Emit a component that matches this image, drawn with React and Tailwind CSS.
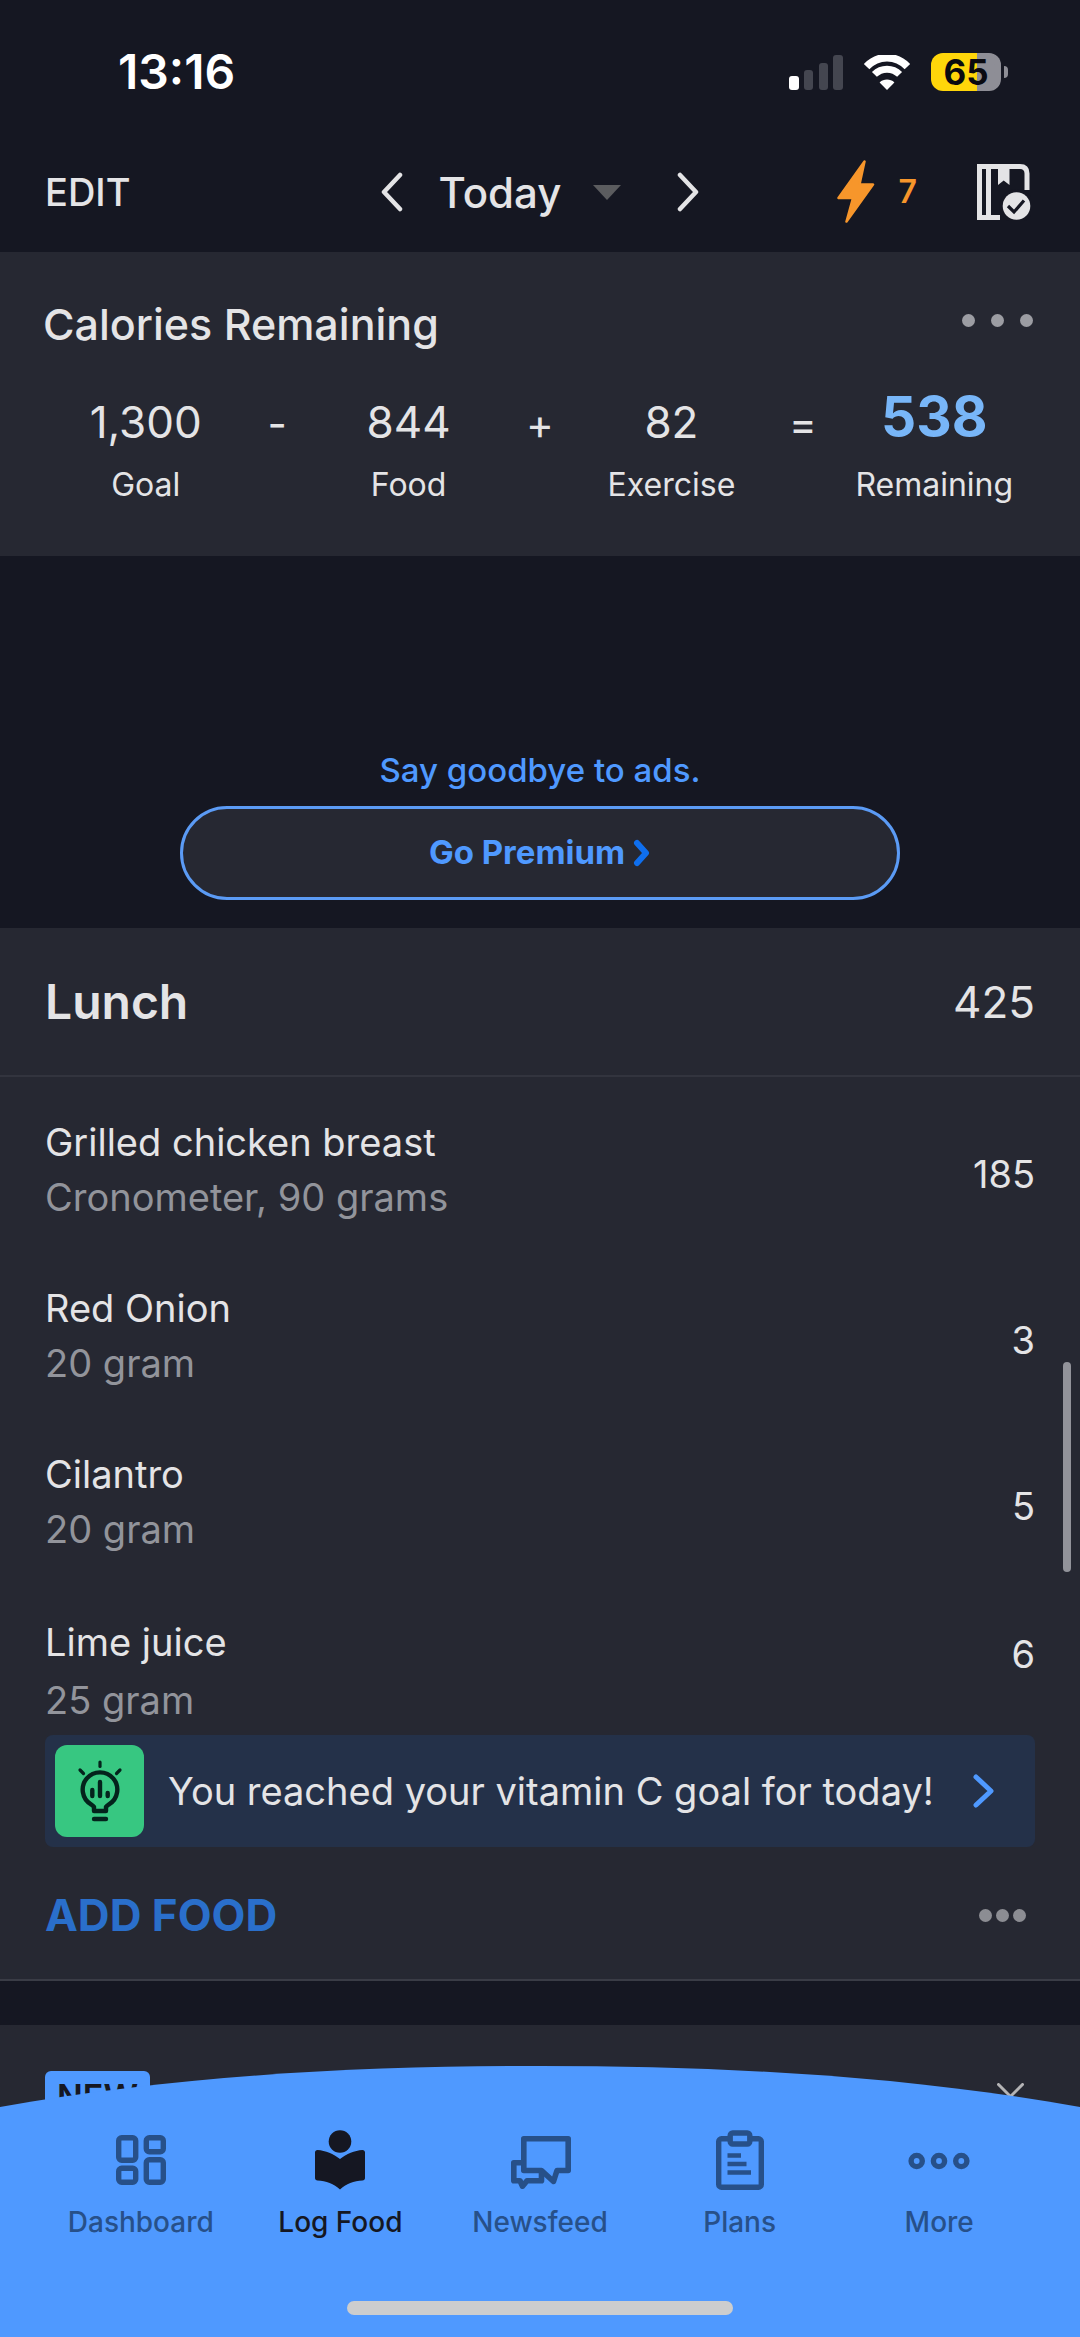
const SUMMARY = [
  { value: "1,300", label: "Goal" },
  { op: "-" },
  { value: "844", label: "Food" },
  { op: "+" },
  { value: "82", label: "Exercise" },
  { op: "=" },
  { value: "538", label: "Remaining", highlight: true },
];

const FOODS = [
  { name: "Grilled chicken breast", detail: "Cronometer, 90 grams", calories: "185" },
  { name: "Red Onion", detail: "20 gram", calories: "3" },
  { name: "Cilantro", detail: "20 gram", calories: "5" },
];

function SignalIcon() {
  return (
    <svg width="54" height="35" viewBox="0 0 54 35" role="img" aria-label="Signal">
      <rect x="0" y="21" width="10" height="14" rx="3" fill="#fff" />
      <rect x="15" y="15" width="9" height="20" rx="3" fill="#444650" />
      <rect x="30" y="8" width="9" height="27" rx="3" fill="#444650" />
      <rect x="44" y="0" width="10" height="35" rx="3" fill="#444650" />
    </svg>
  );
}

function WifiIcon() {
  return (
    <svg width="48" height="35" viewBox="0 0 48 35" fill="none" role="img" aria-label="Wi-Fi">
      <path d="M3.6 11.6C15-0.4 33-0.4 44.4 11.6" stroke="#fff" strokeWidth="7.6" />
      <path d="M11.4 19.4C18.4 12.4 29.6 12.4 36.600 19.4" stroke="#fff" strokeWidth="7" />
      <path d="M24 35L16.600 27.400C20.700 23.600 27.300 23.600 31.400 27.400Z" fill="#fff" />
    </svg>
  );
}

function ChevronLeft() {
  return (
    <svg width="22" height="40" viewBox="0 0 22 40" fill="none" stroke="#e4e4e6" strokeWidth="4.500" strokeLinecap="round" strokeLinejoin="round">
      <path d="M19 3L3 20L19 37" />
    </svg>
  );
}

function ChevronRight() {
  return (
    <svg width="22" height="40" viewBox="0 0 22 40" fill="none" stroke="#e4e4e6" strokeWidth="4.500" strokeLinecap="round" strokeLinejoin="round">
      <path d="M3 3L19 20L3 37" />
    </svg>
  );
}

function BoltIcon() {
  return (
    <svg width="38" height="64" viewBox="0 0 38 64" fill="#f7962b" stroke="#f7962b" strokeWidth="2.500" strokeLinejoin="round">
      <path d="M27.500 1.500L1.500 38H16L9.500 61.500L36 24.500H22.500Z" />
    </svg>
  );
}

function JournalIcon() {
  return (
    <svg width="54" height="57" viewBox="0 0 54 57" fill="none">
      <path d="M50 26V9.500C50 5 47.500 2.500 43 2.500H2.500V53.500H23" stroke="#e4e4e6" strokeWidth="5" />
      <path d="M11.500 3V53" stroke="#e4e4e6" strokeWidth="5" />
      <path d="M21 3H32.500V21L26.700 16.500L21 21Z" fill="#e4e4e6" />
      <circle cx="39.500" cy="42" r="17" fill="#151722" />
      <circle cx="39.500" cy="42" r="13.800" fill="#e4e4e6" />
      <path d="M31 42L37 48L47 36.500" stroke="#151722" strokeWidth="3.200" />
    </svg>
  );
}

function InsightIcon() {
  return (
    <svg width="46" height="62" viewBox="0 0 46 62" fill="none" stroke="#04231c" strokeLinecap="round">
      <path d="M23 2V6.500" strokeWidth="3.200" />
      <path d="M3 10L6.500 13.500M43 10L39.500 13.500" strokeWidth="3.200" />
      <path d="M17 51V47C16.400 46 15.400 45.400 14 44.400A17.300 17.300 0 1 1 32 44.400C30.600 45.400 29.600 46 29 47V51Z" strokeWidth="4.400" strokeLinejoin="round" />
      <path d="M23 22V36M15.300 30V36M30.700 33V36" strokeWidth="4.400" />
      <path d="M17 59H29" strokeWidth="4.400" />
    </svg>
  );
}

function DashboardIcon() {
  return (
    <svg width="60" height="60" viewBox="0 0 60 60" fill="none" stroke="currentColor" strokeWidth="5.400">
      <rect x="7.700" y="7.700" width="17" height="22.500" rx="3" />
      <rect x="35.300" y="7.700" width="17" height="14" rx="3" />
      <rect x="7.700" y="38.300" width="17" height="14" rx="3" />
      <rect x="35.300" y="29.800" width="17" height="22.500" rx="3" />
    </svg>
  );
}

function ReaderIcon() {
  return (
    <svg width="60" height="60" viewBox="0 0 60 60" fill="currentColor">
      <circle cx="30" cy="11.500" r="11.300" />
      <path d="M5 22.500C5 21 6 20 7.500 20C15.500 20.500 23.500 24 30 29C36.500 24 44.500 20.500 52.500 20C54 20 55 21 55 22.500V48C55 49.500 54 50.500 52.500 50.500C44 51 36 53.500 30 59.500C24 53.500 16 51 7.500 50.500C6 50.500 5 49.500 5 48Z" />
    </svg>
  );
}

function NewsfeedIcon() {
  return (
    <svg width="64" height="60" viewBox="0 0 64 60" fill="none" stroke="currentColor" strokeWidth="5.600" strokeLinejoin="round">
      <path d="M15.800 8.800H60.200V40.500H49L45.500 51.500L33.500 40.500H15.800Z" />
      <path d="M15.800 32.800H5.800V50.800H12L14.500 56.200L19 50.800H33.500V41" />
    </svg>
  );
}

function PlansIcon() {
  return (
    <svg width="60" height="60" viewBox="0 0 60 60" fill="none" stroke="currentColor" strokeWidth="5.400">
      <path d="M20 8.700H11.500C10 8.700 8.700 10 8.700 11.500V54.500C8.700 56 10 57.300 11.500 57.300H48.500C50 57.300 51.300 56 51.300 54.500V11.500C51.300 10 50 8.700 48.500 8.700H40" />
      <rect x="20.200" y="3" width="19.600" height="11" rx="2.500" />
      <path d="M17.500 25.500H31M17.500 34H36.500M17.500 42.500H41" strokeWidth="4.400" />
    </svg>
  );
}

function MoreIcon() {
  return (
    <svg width="62" height="60" viewBox="0 0 62 60" fill="none" stroke="currentColor" strokeWidth="5.400">
      <circle cx="8.700" cy="31" r="5.600" />
      <circle cx="31" cy="31" r="5.600" />
      <circle cx="53.300" cy="31" r="5.600" />
    </svg>
  );
}

const TABS = [
  { label: "Dashboard", Icon: DashboardIcon },
  { label: "Log Food", Icon: ReaderIcon, active: true },
  { label: "Newsfeed", Icon: NewsfeedIcon },
  { label: "Plans", Icon: PlansIcon },
  { label: "More", Icon: MoreIcon },
];

function StatusBar() {
  return (
    <div className="flex h-36 items-center justify-between pl-[118px] pr-[72px] text-white">
      <time className="text-[48px] font-semibold">13:16</time>
      <div className="flex items-center gap-5">
        <SignalIcon />
        <WifiIcon />
        <div className="flex items-center gap-[3px]">
          <div className="flex h-[38px] w-[70px] items-center justify-center rounded-xl bg-linear-to-r from-[#ffd60a] from-66% to-[#8e8e96] to-66% text-[35px] leading-none font-bold text-[#0a0a10]">
            65
          </div>
          <div className="h-3 w-1 rounded-r-full bg-[#8e8e96]" />
        </div>
      </div>
    </div>
  );
}

function Header() {
  return (
    <header className="grid h-[108px] grid-cols-[1fr_auto_1fr] items-center px-[45px] pb-3 text-[#e4e4e6]">
      <button type="button" className="justify-self-start text-[38px] font-medium">
        EDIT
      </button>
      <div className="flex items-center">
        <button type="button" aria-label="Previous day">
          <ChevronLeft />
        </button>
        <button type="button" className="flex items-center gap-8 pr-14 pl-9 text-[42px] font-medium">
          Today
          <svg width="28" height="15" viewBox="0 0 28 15" fill="#5b5c5f">
            <path d="M0 0H28L14 15Z" />
          </svg>
        </button>
        <button type="button" aria-label="Next day">
          <ChevronRight />
        </button>
      </div>
      <div className="flex items-center gap-[60px] justify-self-end pr-1">
        <button type="button" aria-label="Streak" className="flex items-center gap-6 text-[32px] font-semibold text-[#f7962b]">
          <BoltIcon />7
        </button>
        <button type="button" aria-label="Complete diary">
          <JournalIcon />
        </button>
      </div>
    </header>
  );
}

function CalorieSummary() {
  return (
    <section className="h-[304px] bg-[#262832] text-[#e4e4e6]">
      <div className="flex items-center justify-between px-[43px] pt-10">
        <h2 className="text-[43px] leading-[64px] font-medium">Calories Remaining</h2>
        <button type="button" aria-label="Summary options" className="flex gap-4 pr-1 pb-2">
          <span className="size-[13px] rounded-full bg-[#9c9da3]" />
          <span className="size-[13px] rounded-full bg-[#9c9da3]" />
          <span className="size-[13px] rounded-full bg-[#9c9da3]" />
        </button>
      </div>
      <div className="mt-7 grid grid-cols-7 px-20">
        {SUMMARY.map((item) =>
          item.op ? (
            <span key={item.op} className="text-center text-[42px] leading-[80px]">
              {item.op}
            </span>
          ) : (
            <div key={item.label} className="flex flex-col items-center whitespace-nowrap">
              {item.highlight ? (
                <strong className="pt-0.5 text-[55px] leading-[60px] font-bold text-[#78b6f8]">{item.value}</strong>
              ) : (
                <span className="text-[44px] leading-[76px]">{item.value}</span>
              )}
              <span className={item.highlight ? "pt-3.5 text-[32px] leading-[50px]" : "text-[32px] leading-[50px]"}>{item.label}</span>
            </div>
          )
        )}
      </div>
    </section>
  );
}

function PremiumBanner() {
  return (
    <section className="flex h-[372px] flex-col items-center justify-end pb-7 text-[#4f99ff]">
      <p className="text-[33px] leading-[44px] font-medium">Say goodbye to ads.</p>
      <button type="button" className="mt-3.5 flex h-[94px] w-2/3 items-center justify-center gap-2 rounded-full border-[3px] border-[#5b9bf5] bg-[#262832] text-[33px] font-bold">
        Go Premium
        <svg width="18" height="28" viewBox="0 0 18 28" fill="none" stroke="#0f6fee" strokeWidth="6" strokeLinecap="round" strokeLinejoin="round">
          <path d="M4 4L13 14L4 24" />
        </svg>
      </button>
    </section>
  );
}

function LunchCard() {
  return (
    <section className="border-b-2 border-[#3a3c46] bg-[#262832] text-[#e4e4e6]">
      <div className="flex h-[149px] items-center justify-between border-b-2 border-[#32343e] px-[45px]">
        <h2 className="text-[48px] font-semibold">Lunch</h2>
        <span className="text-[44px]">425</span>
      </div>
      <ul className="px-[45px] pt-3.5 text-[38px]">
        {FOODS.map((food) => (
          <li key={food.name} className="flex h-[166px] items-center justify-between">
            <div className="pb-2">
              <p className="leading-[55px]">{food.name}</p>
              <p className="leading-[55px] text-[#92949b]">{food.detail}</p>
            </div>
            <span>{food.calories}</span>
          </li>
        ))}
        <li className="flex items-start justify-between pt-6 leading-[58px]">
          <div>
            <p>Lime juice</p>
            <p className="text-[#92949b]">25 gram</p>
          </div>
          <span className="pt-3">6</span>
        </li>
      </ul>
      <div className="mt-1.5 px-[45px]">
        <button type="button" className="flex h-28 w-full items-center rounded-lg bg-[#243149] pr-10 pl-2.5">
          <span className="flex h-[92px] w-[89px] items-center justify-center rounded-xl bg-[#37c781]">
            <InsightIcon />
          </span>
          <span className="flex-1 pl-6 text-left text-[38px] whitespace-nowrap">You reached your vitamin C goal for today!</span>
          <svg width="22" height="34" viewBox="0 0 22 34" fill="none" stroke="#4f99ff" strokeWidth="5" strokeLinecap="round" strokeLinejoin="round">
            <path d="M3 3L18 17L3 31" />
          </svg>
        </button>
      </div>
      <div className="flex h-[132px] items-center justify-between pt-1 pr-[54px] pl-[45px]">
        <button type="button" className="text-[44px] font-bold text-[#2a6fcb]">
          ADD FOOD
        </button>
        <button type="button" aria-label="Lunch options" className="flex gap-1">
          <span className="size-[13px] rounded-full bg-[#8c8d93]" />
          <span className="size-[13px] rounded-full bg-[#8c8d93]" />
          <span className="size-[13px] rounded-full bg-[#8c8d93]" />
        </button>
      </div>
    </section>
  );
}

function NewFeatureCard() {
  return (
    <section className="mt-11 flex h-[312px] items-start justify-between bg-[#262832] pt-[46px] pr-[56px] pl-[45px]">
      <span className="rounded-md bg-[#4f99ff] px-3 pt-1 text-[34px] leading-[44px] font-semibold text-[#151722]">NEW</span>
      <button type="button" aria-label="Dismiss" className="pt-3">
        <svg width="27" height="27" viewBox="0 0 27 27" stroke="#b4b4b6" strokeWidth="3" strokeLinecap="round">
          <path d="M1.500 1.500L25.500 25.500M25.500 1.500L1.500 25.500" />
        </svg>
      </button>
    </section>
  );
}

function TabBar() {
  return (
    <nav className="fixed inset-x-0 bottom-0">
      <svg className="block h-[42px] w-full" viewBox="0 0 1080 42" preserveAspectRatio="none" fill="#4f99ff">
        <path d="M0 42V41C180 9 360 0 540 0S900 9 1080 41V42Z" />
      </svg>
      <div className="bg-[#4f99ff] px-[41px] pt-[22px] pb-[22px]">
        <div className="grid grid-cols-5">
          {TABS.map(({ label, Icon, active }) => (
            <a
              key={label}
              href="#"
              aria-current={active ? "page" : undefined}
              className={
                active
                  ? "flex flex-col items-center gap-3 text-[28px] leading-[40px] font-medium text-[#151722]"
                  : "flex flex-col items-center gap-3 text-[28px] leading-[40px] font-medium text-[#275089]"
              }
            >
              <Icon />
              {label}
            </a>
          ))}
        </div>
        <div className="mx-auto mt-[59px] h-3.5 w-[386px] rounded-full bg-[#cccdce]" />
      </div>
    </nav>
  );
}

export default function App() {
  return (
    <div className="relative min-h-screen overflow-hidden bg-[#151722] font-['Inter',sans-serif]">
      <StatusBar />
      <Header />
      <main>
        <CalorieSummary />
        <PremiumBanner />
        <LunchCard />
        <NewFeatureCard />
      </main>
      <div className="absolute top-[1362px] right-[9px] h-[210px] w-2 rounded-full bg-[#92939a]" />
      <TabBar />
    </div>
  );
}
